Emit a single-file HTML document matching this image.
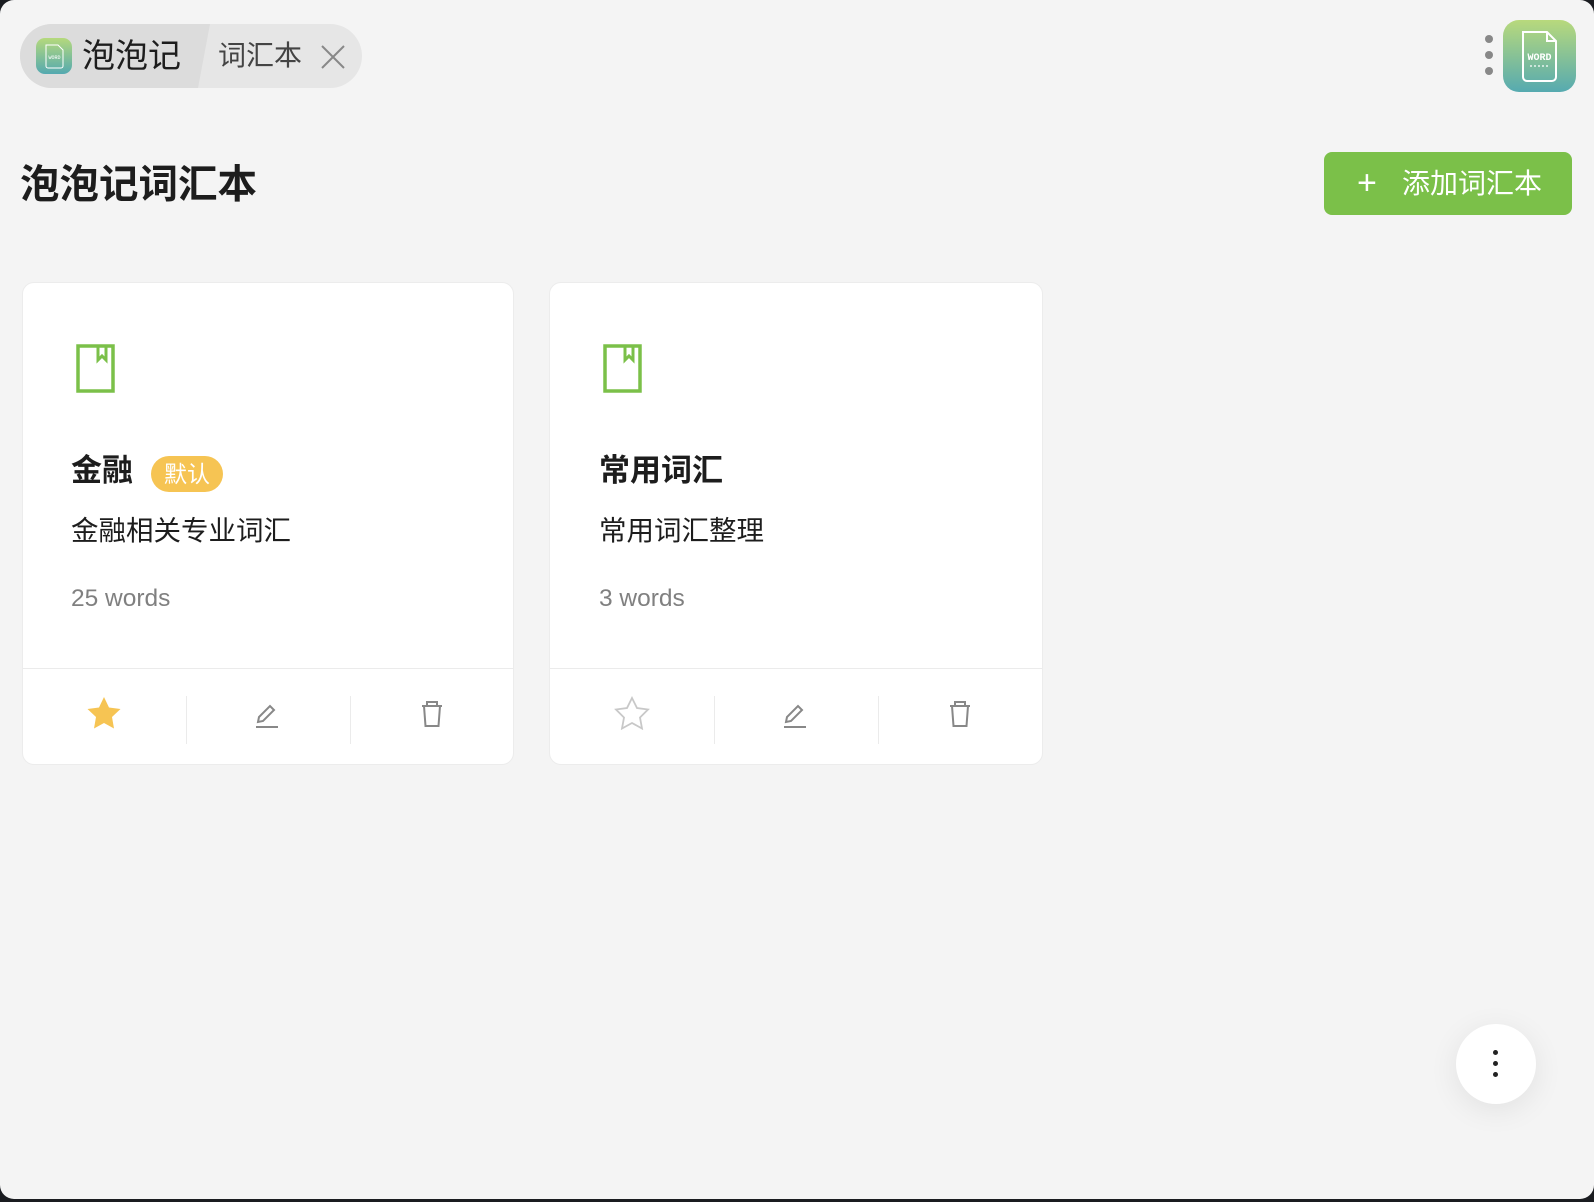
<!DOCTYPE html>
<html><head><meta charset="utf-8"><style>
*{margin:0;padding:0;box-sizing:border-box}
body{width:1594px;height:1202px;background:#1a1c20;overflow:hidden;font-family:"Liberation Sans","Noto Sans CJK SC",sans-serif}
.win{position:absolute;left:0;top:0;width:1594px;height:1199px;background:#f4f4f4;border-radius:14px 14px 14px 14px}
.abs{position:absolute}
.pill{left:20px;top:24px;width:342px;height:64px;border-radius:32px;background:#e6e6e6;overflow:hidden}
.pill .l{position:absolute;left:0;top:0;width:190px;height:64px;background:#dcdcdc;clip-path:polygon(0 0,100% 0,178px 100%,0 100%)}
.card{background:#fff;border-radius:12px;border:1px solid #ececec}
.t{color:#1d1d1d}
</style></head><body>
<div class="win">
<div class="abs pill"><div class="l"></div>
<div class="abs" style="left:16px;top:14px;width:36px;height:36px;border-radius:9px;background:linear-gradient(#b5d97c,#54a9b0)">
<svg width="36" height="36"><path d="M10 7h12l5 5v16a2 2 0 0 1-2 2H12a2 2 0 0 1-2-2z" fill="none" stroke="#fff" stroke-width="1"/><text x="18.5" y="21" font-size="5" fill="#fff" text-anchor="middle" font-family="Liberation Mono">WORD</text></svg></div>
<div class="abs t" style="left:62px;top:10px;font-size:33px;line-height:44px">泡泡记</div>
<div class="abs" style="left:198px;top:14px;font-size:28px;line-height:36px;color:#444">词汇本</div>
<svg class="abs" style="left:300px;top:20px" width="26" height="26"><path d="M2 2L24 24M24 2L2 24" stroke="#888" stroke-width="2"/></svg>
</div>
<div class="abs" style="left:1485px;top:35px;width:8px;height:8px;border-radius:50%;background:#888;box-shadow:0 16px 0 #888,0 32px 0 #888"></div>
<div class="abs" style="left:1503px;top:20px;width:73px;height:72px;border-radius:16px;background:linear-gradient(#b8d97c,#56aab0)">
<svg width="73" height="72"><path d="M20 12h24l9 9v36a4 4 0 0 1-4 4H24a4 4 0 0 1-4-4z M44 12v9h9" fill="none" stroke="#fff" stroke-width="2"/><text x="36.5" y="40" font-size="10" font-weight="bold" fill="#fff" text-anchor="middle" font-family="Liberation Mono">WORD</text><path d="M27 46h19" stroke="#fff" stroke-width="1.2" stroke-dasharray="2 2"/></svg></div>
<div class="abs t" style="left:20px;top:160px;font-size:39.5px;font-weight:bold;line-height:50px">泡泡记词汇本</div>
<div class="abs" style="left:1324px;top:152px;width:248px;height:63px;border-radius:8px;background:#7bc049;color:#fff;font-size:28px;line-height:63px">
<span style="position:absolute;left:33px;top:0;font-size:34px">+</span><span style="position:absolute;left:78px">添加词汇本</span></div>

<div class="abs card" style="left:22px;top:282px;width:492px;height:483px">
<svg class="abs" style="left:53px;top:61px" width="40" height="49"><path d="M2 2h35v45H2z" fill="none" stroke="#7bc049" stroke-width="3.5"/><path d="M22 2v14l4-4 4 4V2" fill="none" stroke="#7bc049" stroke-width="3"/></svg>
<div class="abs t" style="left:48px;top:168px;font-size:31px;font-weight:bold;line-height:40px">金融</div>
<div class="abs" style="left:128px;top:173px;width:72px;height:36px;border-radius:18px;background:#f6c453;color:#fff;font-size:23px;line-height:36px;text-align:center">默认</div>
<div class="abs t" style="left:48px;top:230px;font-size:27.5px;line-height:36px">金融相关专业词汇</div>
<div class="abs" style="left:48px;top:302px;font-size:24.5px;color:#808080">25 words</div>
<div class="abs" style="left:0;top:385px;width:490px;height:1px;background:#ebebeb"></div>
<div class="abs" style="left:163px;top:413px;width:1px;height:48px;background:#ebebeb"></div>
<div class="abs" style="left:327px;top:413px;width:1px;height:48px;background:#ebebeb"></div>
<svg class="abs" style="left:63px;top:413px" width="36" height="34"><path d="M18 1l5 10.5 11.5 1.5-8.5 8 2 11.5L18 27l-10 5.5 2-11.5-8.5-8L13 11.5z" fill="#f6c453"/></svg>
<svg class="abs" style="left:229px;top:418px" width="28" height="28"><path d="M4 26h22M6 21l1-5L18 5l4 4-11 11z" fill="none" stroke="#888" stroke-width="2"/></svg>
<svg class="abs" style="left:396px;top:417px" width="26" height="28"><path d="M3 6h20M8 6V2h10v4M5 6l1.5 20h13L21 6" fill="none" stroke="#888" stroke-width="2"/></svg>
</div>

<div class="abs card" style="left:549px;top:282px;width:494px;height:483px">
<svg class="abs" style="left:53px;top:61px" width="40" height="49"><path d="M2 2h35v45H2z" fill="none" stroke="#7bc049" stroke-width="3.5"/><path d="M22 2v14l4-4 4 4V2" fill="none" stroke="#7bc049" stroke-width="3"/></svg>
<div class="abs t" style="left:49px;top:168px;font-size:31px;font-weight:bold;line-height:40px">常用词汇</div>
<div class="abs t" style="left:49px;top:230px;font-size:27.5px;line-height:36px">常用词汇整理</div>
<div class="abs" style="left:49px;top:302px;font-size:24.5px;color:#808080">3 words</div>
<div class="abs" style="left:0;top:385px;width:492px;height:1px;background:#ebebeb"></div>
<div class="abs" style="left:164px;top:413px;width:1px;height:48px;background:#ebebeb"></div>
<div class="abs" style="left:328px;top:413px;width:1px;height:48px;background:#ebebeb"></div>
<svg class="abs" style="left:64px;top:413px" width="36" height="34"><path d="M18 2l5 10 11 1.5-8 8 2 11L18 27l-10 5.5 2-11-8-8L13 12z" fill="none" stroke="#c8c8c8" stroke-width="1.8"/></svg>
<svg class="abs" style="left:230px;top:418px" width="28" height="28"><path d="M4 26h22M6 21l1-5L18 5l4 4-11 11z" fill="none" stroke="#888" stroke-width="2"/></svg>
<svg class="abs" style="left:397px;top:417px" width="26" height="28"><path d="M3 6h20M8 6V2h10v4M5 6l1.5 20h13L21 6" fill="none" stroke="#888" stroke-width="2"/></svg>
</div>

<div class="abs" style="left:1456px;top:1024px;width:80px;height:80px;border-radius:50%;background:#fff;box-shadow:0 6px 30px rgba(0,0,0,0.08)">
<div class="abs" style="left:37px;top:26px;width:5px;height:5px;border-radius:50%;background:#222;box-shadow:0 11px 0 #222,0 22px 0 #222"></div></div>
</div>
</body></html>
